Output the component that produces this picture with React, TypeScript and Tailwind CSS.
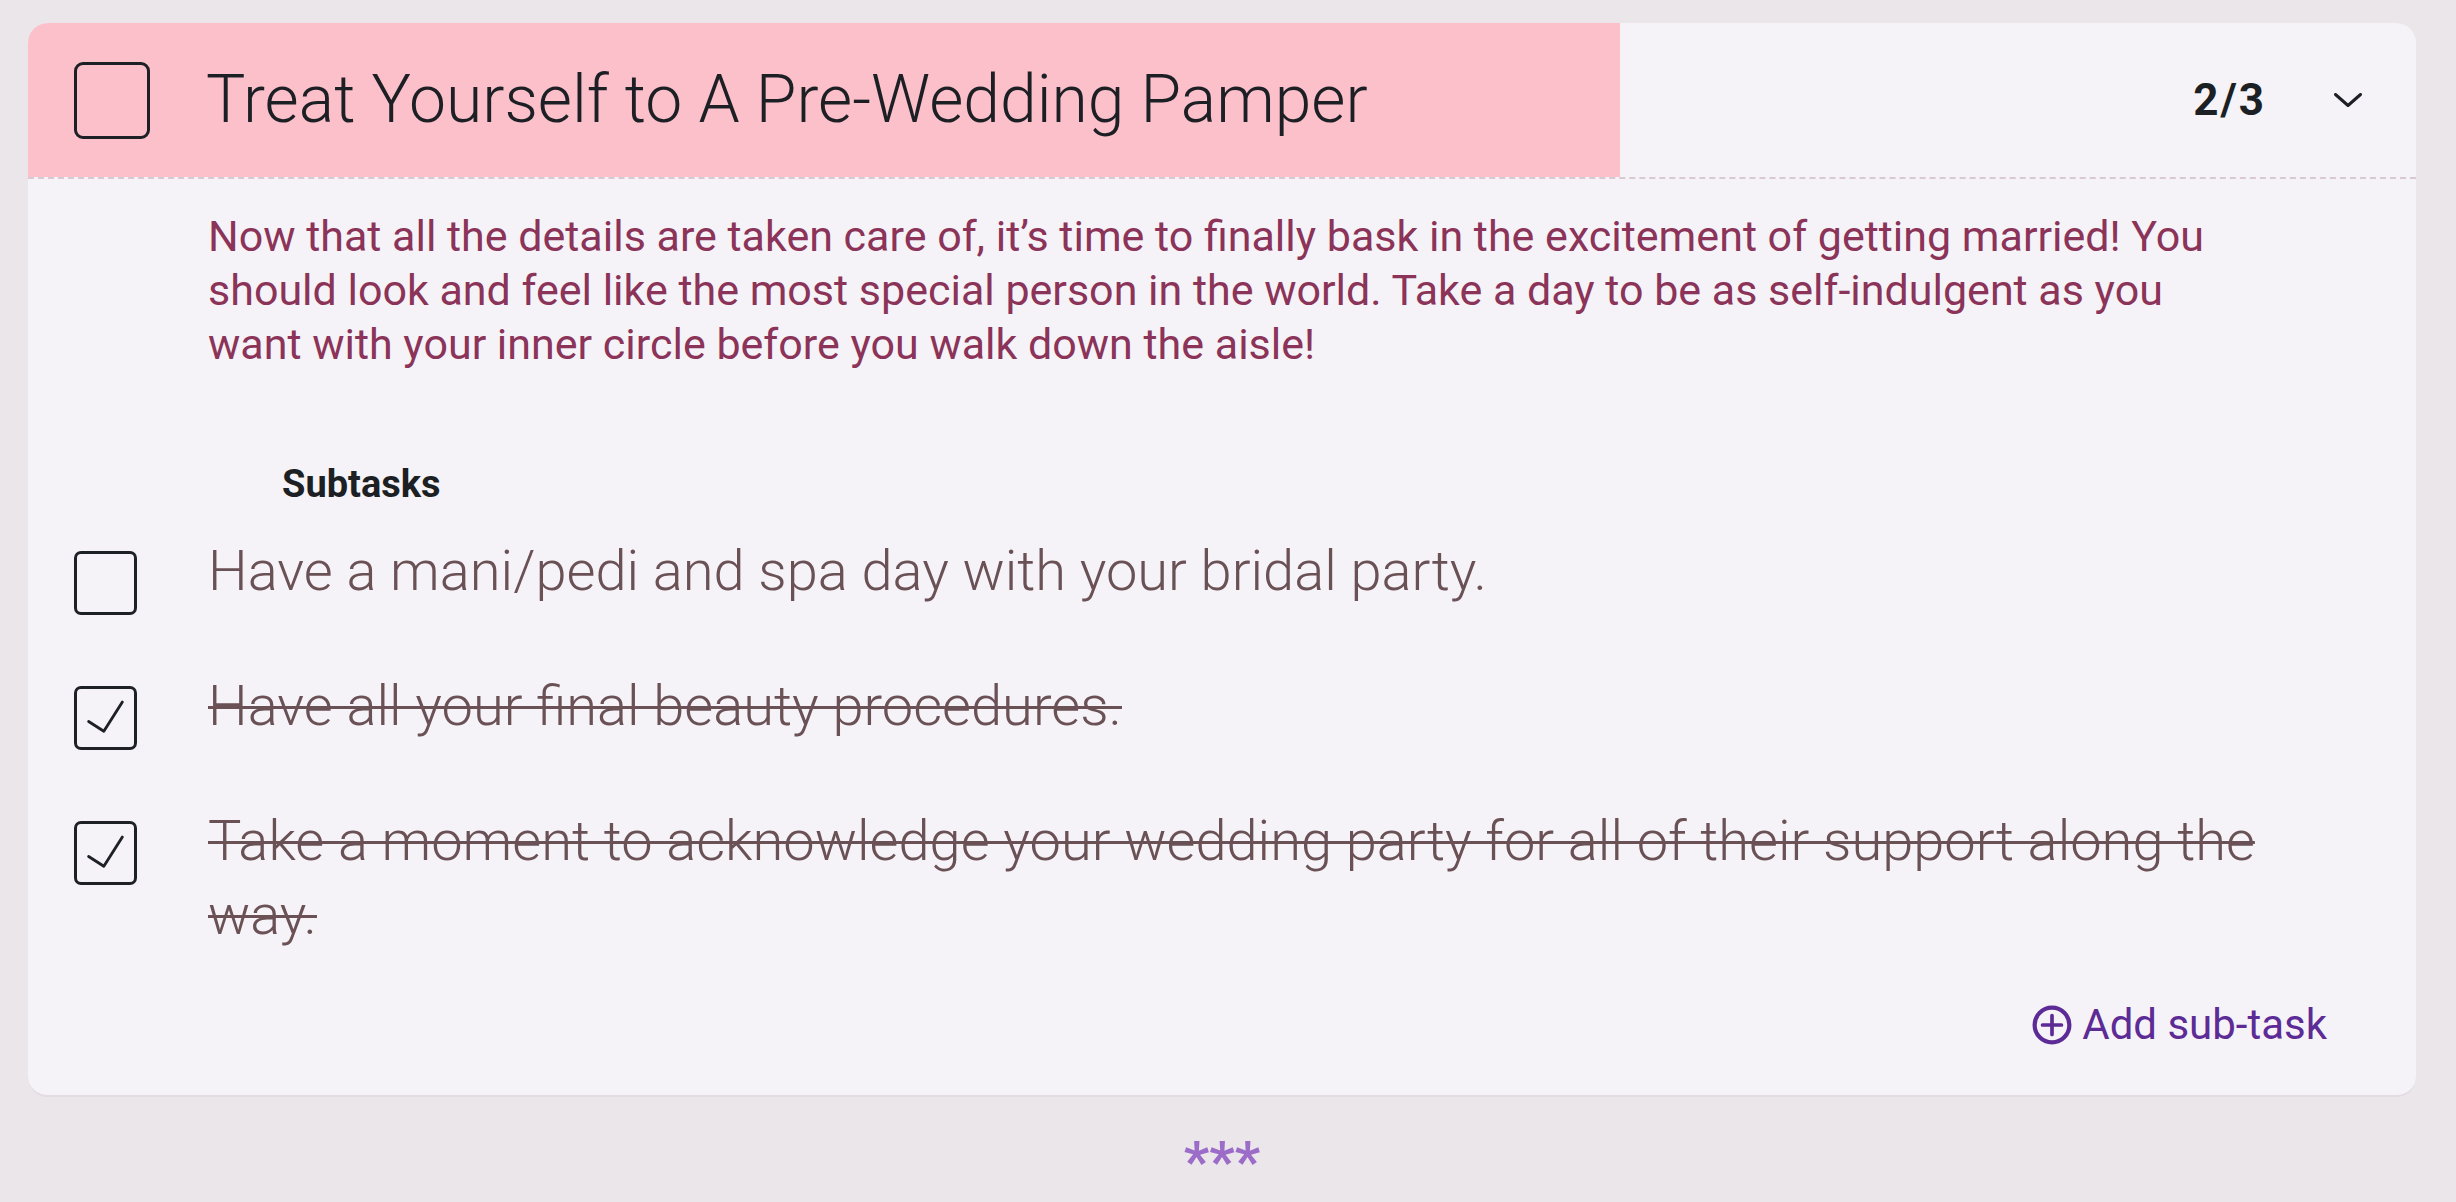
import React from 'react';

const subtasks = [
  { text: 'Have a mani/pedi and spa day with your bridal party.', done: false },
  { text: 'Have all your final beauty procedures.', done: true },
  {
    text: 'Take a moment to acknowledge your wedding party for all of their support along the way.',
    done: true,
  },
];

function CheckBox({ size, checked }: { size: 'lg' | 'sm'; checked?: boolean }) {
  const box =
    size === 'lg'
      ? 'w-[76px] h-[77px] rounded-[9px]'
      : 'w-[63px] h-[64px] rounded-[7px]';
  return (
    <div
      className={`${box} shrink-0 border-[3px] border-[#1d2025] flex items-center justify-center`}
    >
      {checked && (
        <svg viewBox="0 0 24 24" className="w-[58px] h-[58px]" fill="none">
          <path
            d="M4.9 13.5 L11.3 17.6 L19.1 5.3"
            stroke="#1d2025"
            strokeWidth="1.2"
            strokeLinecap="round"
            strokeLinejoin="round"
          />
        </svg>
      )}
    </div>
  );
}

export default function App() {
  const font = { fontFamily: 'Roboto, "Noto Sans", sans-serif' };
  return (
    <div
      className="min-h-screen bg-[#ebe6ea] pt-[23px] pl-[28px] pr-[40px]"
      style={font}
    >
      {/* Task card */}
      <div className="rounded-[20px] bg-[#f5f3f7] border-b-2 border-[#e2dbe2] overflow-hidden">
        {/* Header with progress fill */}
        <div className="relative h-[156px] border-b-2 border-dashed border-[#d9c9d2]">
          <div className="absolute inset-y-0 left-0 w-2/3 bg-[#fcc0cb]" />
          <div className="relative h-full flex items-center pl-[46px] pr-[54px]">
            <CheckBox size="lg" />
            <h1 className="ml-[56px] text-[66px] font-light text-[#1c1f24] leading-none">
              Treat Yourself to A Pre-Wedding Pamper
            </h1>
            <div className="ml-auto flex items-center gap-[68px]">
              <span className="text-[44px] tracking-[2px] font-bold text-[#1c1f24] leading-none">
                2/3
              </span>
              <svg viewBox="0 0 28 14" className="w-[28px] h-[14px]" fill="none">
                <path
                  d="M1.5 1.5 L14 12.5 L26.5 1.5"
                  stroke="#1c1f24"
                  strokeWidth="3"
                  strokeLinecap="round"
                  strokeLinejoin="round"
                />
              </svg>
            </div>
          </div>
        </div>

        {/* Body */}
        <div className="pt-[30px] pb-[46px]">
          <p className="pl-[180px] pr-[180px] text-[43px] leading-[54px] text-[#8b3358]">
            Now that all the details are taken care of, it’s time to finally bask in the
            excitement of getting married! You should look and feel like the most special
            person in the world. Take a day to be as self-indulgent as you want with your
            inner circle before you walk down the aisle!
          </p>

          <h2 className="mt-[92px] pl-[254px] text-[38px] leading-[42px] font-bold text-[#1c1f24]">
            Subtasks
          </h2>

          <div className="mt-[29px] flex flex-col gap-[54px] pl-[46px] pr-[150px]">
            {subtasks.map((s) => (
              <div key={s.text} className="flex items-start gap-[71px]">
                <div className="mt-[17px]">
                  <CheckBox size="sm" checked={s.done} />
                </div>
                <span
                  className={`text-[56px] leading-[74px] font-light text-[#6a5156] ${
                    s.done ? 'line-through decoration-[3px]' : ''
                  }`}
                >
                  {s.text}
                </span>
              </div>
            ))}
          </div>

          <div className="mt-[49px] flex justify-end pr-[89px]">
            <button className="flex items-center gap-[10px] text-[42px] leading-[48px] font-normal text-[#5d2b96]">
              <svg viewBox="0 0 38 38" className="w-[40px] h-[40px]" fill="none">
                <circle cx="19" cy="19" r="16.5" stroke="#5d2b96" strokeWidth="4" />
                <path
                  d="M19 10 V28 M10 19 H28"
                  stroke="#5d2b96"
                  strokeWidth="3.5"
                  strokeLinecap="round"
                />
              </svg>
              Add sub-task
            </button>
          </div>
        </div>
      </div>

      {/* Divider */}
      <div className="mt-[37px] text-center text-[56px] leading-[56px] font-bold text-[#9c6dc8]">
        ***
      </div>
    </div>
  );
}
